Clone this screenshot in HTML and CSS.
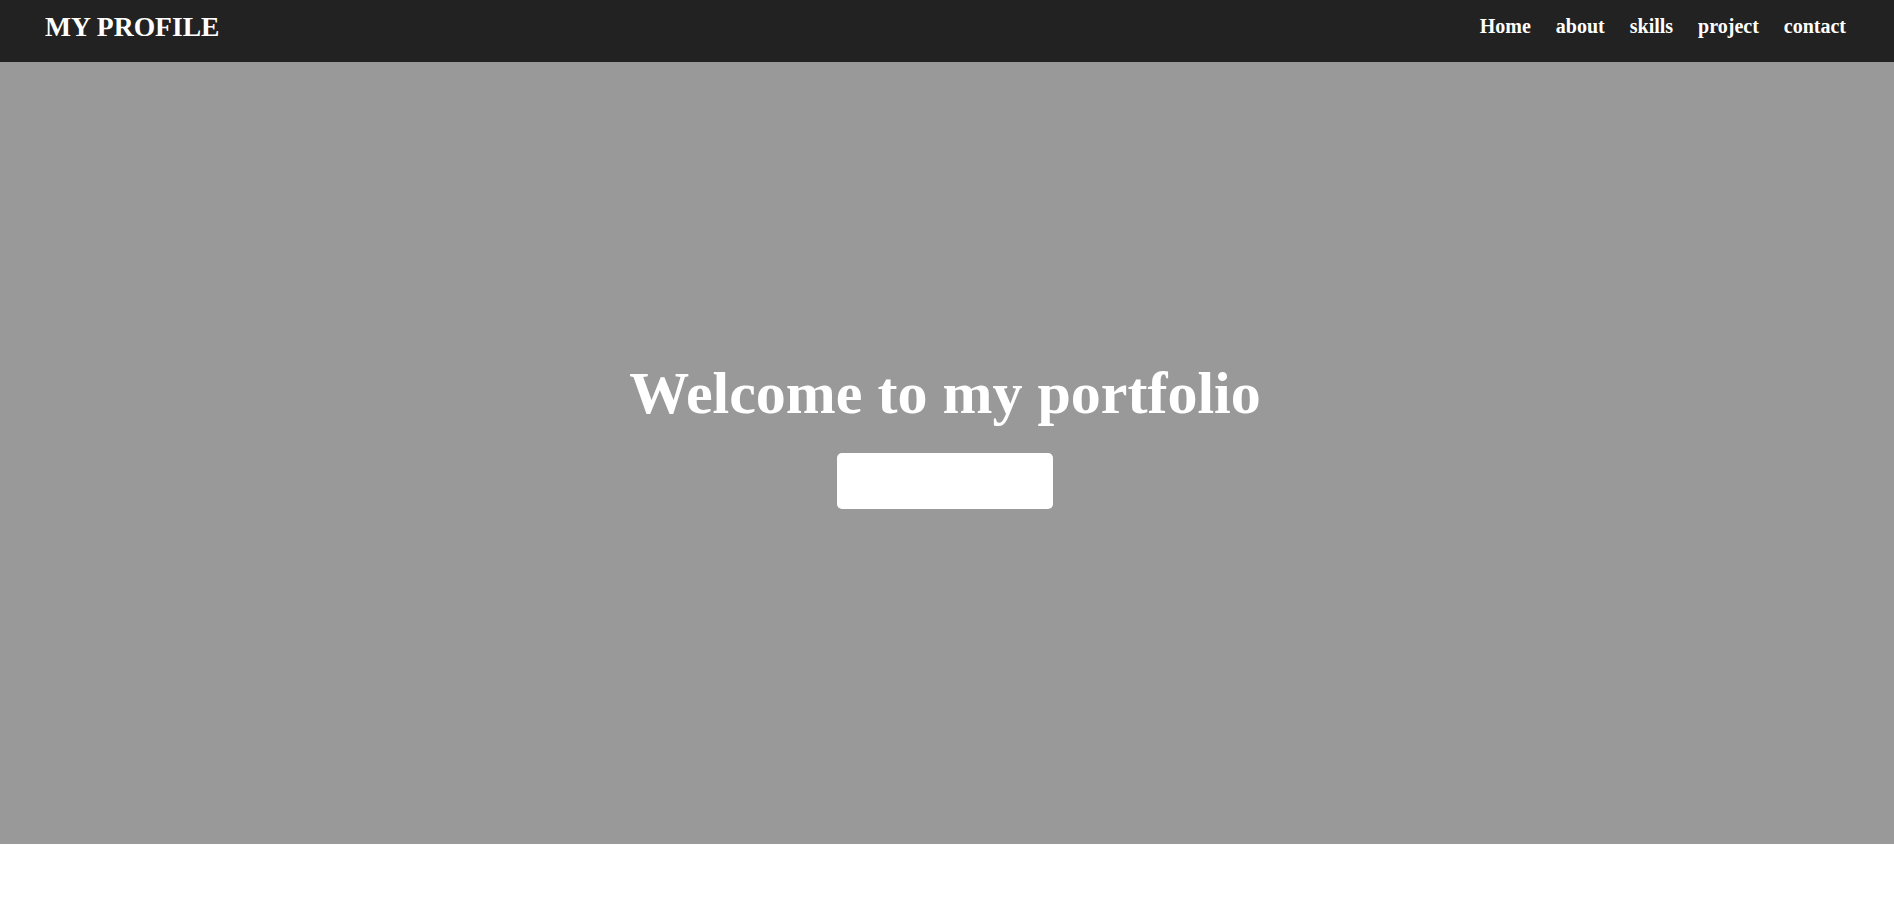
FILE: index.html
```html
<!DOCTYPE html>
<html lang="en">
<head>
<meta charset="utf-8">
<title>My Profile</title>
<link rel="stylesheet" href="styles.css">
</head>
<body>
<header class="topbar">
  <div class="logo">MY PROFILE</div>
  <nav class="nav">
    <a href="#" class="nav-link">Home</a>
    <a href="#" class="nav-link">about</a>
    <a href="#" class="nav-link">skills</a>
    <a href="#" class="nav-link">project</a>
    <a href="#" class="nav-link">contact</a>
  </nav>
</header>
<section class="hero">
  <h1 class="hero-title">Welcome to my portfolio</h1>
  <a href="#" class="hero-btn">Hire me</a>
</section>
</body>
</html>
```

FILE: styles.css
```css
* { box-sizing: border-box; }
html, body { margin: 0; padding: 0; }
body {
  font-family: "Liberation Serif", "Times New Roman", serif;
  background: #ffffff;
  color: #ffffff;
}
.topbar {
  height: 62px;
  background: #222222;
  display: flex;
  align-items: center;
  justify-content: space-between;
  padding: 0 48px 9px 45px;
}
.logo {
  font-size: 27.6px;
  font-weight: bold;
  color: #ffffff;
}
.nav {
  display: flex;
  gap: 25px;
}
.nav-link {
  font-size: 20px;
  font-weight: bold;
  color: #ffffff;
  text-decoration: none;
}
.hero {
  height: 782px;
  background: #999999;
  display: flex;
  flex-direction: column;
  align-items: center;
  padding-top: 297px;
  padding-right: 4px;
}
.hero-title {
  margin: 0;
  font-size: 60px;
  font-weight: bold;
  color: #ffffff;
}
.hero-btn {
  margin-top: 25px;
  width: 216px;
  height: 56px;
  background: #ffffff;
  border-radius: 5px;
  color: #ffffff;
  text-decoration: none;
  display: flex;
  align-items: center;
  justify-content: center;
  font-size: 20px;
}
```
